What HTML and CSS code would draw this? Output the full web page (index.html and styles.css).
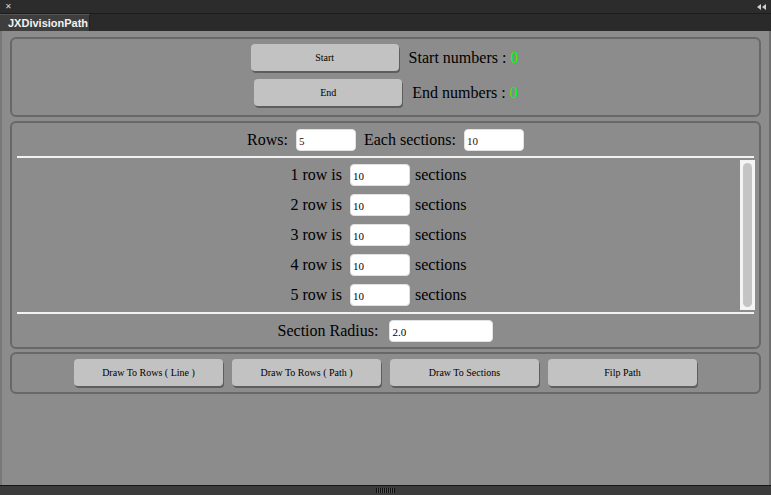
FILE: index.html
```html
<!DOCTYPE html>
<html>
<head>
<meta charset="utf-8">
<link rel="stylesheet" href="styles.css">
</head>
<body>
<div class="window">
  <div class="titlebar">
    <span class="close">✕</span>
    <svg class="collapse" width="9" height="6" viewBox="0 0 9 6"><path d="M4 0 L0 3 L4 6 Z M9 0 L5 3 L9 6 Z" fill="#cfcfcf"/></svg>
  </div>
  <div class="tabbar">
    <div class="tab">JXDivisionPath</div>
  </div>
  <div class="content">
    <div class="panel p1">
      <div class="crow r-start">
        <button class="btn big">Start</button>
        <span class="lbl">Start numbers : <span class="green">0</span></span>
      </div>
      <div class="crow r-end">
        <button class="btn big">End</button>
        <span class="lbl">End numbers : <span class="green">0</span></span>
      </div>
    </div>
    <div class="panel p2">
      <div class="crow top">
        <span class="lbl">Rows:</span>
        <input class="inp w60 red" value="5">
        <span class="lbl">Each sections:</span>
        <input class="inp w60 red" value="10">
      </div>
      <div class="sep"></div>
      <div class="listwrap">
        <div class="list">
          <div class="lrow"><span class="lbl">1 row is</span><input class="inp w60" value="10"><span class="lbl">sections</span></div>
          <div class="lrow"><span class="lbl">2 row is</span><input class="inp w60" value="10"><span class="lbl">sections</span></div>
          <div class="lrow"><span class="lbl">3 row is</span><input class="inp w60" value="10"><span class="lbl">sections</span></div>
          <div class="lrow"><span class="lbl">4 row is</span><input class="inp w60" value="10"><span class="lbl">sections</span></div>
          <div class="lrow"><span class="lbl">5 row is</span><input class="inp w60" value="10"><span class="lbl">sections</span></div>
        </div>
        <div class="scroll"><div class="thumb"></div></div>
      </div>
      <div class="sep"></div>
      <div class="crow radius">
        <span class="lbl">Section Radius:</span>
        <input class="inp w104" value="2.0">
      </div>
    </div>
    <div class="panel p3">
      <button class="btn small">Draw To Rows ( Line )</button>
      <button class="btn small">Draw To Rows ( Path )</button>
      <button class="btn small">Draw To Sections</button>
      <button class="btn small">Filp Path</button>
    </div>
  </div>
  <div class="bottombar">
    <div class="grip"></div>
  </div>
</div>
</body>
</html>
```

FILE: styles.css
```css
html, body {
  margin: 0;
  padding: 0;
  background: #8c8c8c;
}
body {
  width: 771px;
  height: 495px;
  overflow: hidden;
  font-family: "Liberation Serif", "Times New Roman", serif;
}
.window {
  width: 771px;
  height: 495px;
  display: flex;
  flex-direction: column;
  box-sizing: border-box;
  border-left: 2px solid #787878;
  border-right: 2px solid #6e6e6e;
}
.titlebar {
  height: 13px;
  background: #2c2c2c;
  display: flex;
  align-items: center;
  justify-content: space-between;
  padding: 0 5px 0 5px;
  margin: 0 -2px 0 -2px;
}
.close {
  color: #d8d8d8;
  font-family: "DejaVu Sans", sans-serif;
  font-size: 8px;
  font-weight: bold;
  line-height: 13px;
}
.tabbar {
  height: 17px;
  background: #2a2a2a;
  border-top: 1px solid #1c1c1c;
  display: flex;
  margin: 0 -2px 0 -2px;
}
.tab {
  width: 90px;
  background: #3e3e3e;
  border-top: 1px solid #555;
  color: #f2f2f2;
  font-family: "Liberation Sans", Arial, sans-serif;
  font-weight: bold;
  font-size: 11px;
  line-height: 16px;
  padding-left: 8px;
  box-sizing: border-box;
  border-right: 1px solid #222;
}
.content {
  flex: 1;
  padding: 6px 8px 0 8px;
  display: flex;
  flex-direction: column;
  gap: 4px;
}
.panel {
  border: 2px solid #686868;
  border-radius: 6px;
  box-sizing: border-box;
}
.p1 {
  height: 80px;
  padding-top: 5px;
  display: flex;
  flex-direction: column;
  gap: 8px;
}
.crow {
  display: flex;
  justify-content: center;
  align-items: center;
}
.r-start { gap: 10px; margin-left: -2px; }
.r-end { gap: 10px; margin-left: 1px; }
.lbl {
  font-size: 16px;
  color: #000;
  white-space: nowrap;
}
.green { color: #00ff00; }
.btn {
  font-family: "Liberation Serif", "Times New Roman", serif;
  background: #c2c2c2;
  border: none;
  border-radius: 4px;
  box-shadow: 1px 2px 0 #5e5e5e;
  color: #000;
  padding: 0;
  margin: 0;
}
.btn.big {
  width: 148px;
  height: 27px;
  font-size: 10px;
}
.p2 {
  height: 228px;
  display: flex;
  flex-direction: column;
  padding: 0 4px;
}
.top {
  height: 33px;
  gap: 8px;
  padding-top: 1px;
  box-sizing: border-box;
}
.inp {
  height: 22px;
  box-sizing: border-box;
  border: 1px solid #e2e2e2;
  border-radius: 4px;
  background: #fff;
  font-family: "Liberation Serif", "Times New Roman", serif;
  font-size: 11px;
  color: #000;
  padding: 2px 0 0 2px;
  margin: 0;
  outline: none;
}
.inp.red { color: #3a0a00; }
.w60 { width: 60px; }
.w104 { width: 104px; }
.sep {
  height: 2px;
  background: #f2f2f2;
  margin: 0 1px;
}
.listwrap {
  display: flex;
  height: 154px;
  padding: 2px 0 0 0;
  box-sizing: border-box;
}
.list {
  flex: 1;
  display: flex;
  flex-direction: column;
  padding-top: 4px;
  gap: 8px;
}
.lrow {
  display: flex;
  justify-content: center;
  align-items: center;
  gap: 8px;
  height: 22px;
  padding-left: 1px;
}
.lrow .lbl:last-child { margin-left: -3px; }
.scroll {
  width: 15px;
  height: 150px;
  background: #f4f4f4;
  box-sizing: border-box;
  padding: 3px;
}
.thumb {
  width: 9px;
  height: 144px;
  background: #c4c4c4;
  border-radius: 5px;
}
.radius {
  flex: 1;
  gap: 11px;
}
.p3 {
  height: 42px;
  margin-top: -1px;
  display: flex;
  justify-content: center;
  align-items: flex-start;
  gap: 9px;
  padding-top: 5px;
}
.btn.small {
  width: 149px;
  height: 27px;
  font-size: 10px;
}
.bottombar {
  height: 9px;
  background: #3b3b3b;
  border-top: 1px solid #161616;
  display: flex;
  justify-content: center;
  align-items: center;
  margin: 0 -2px 0 -2px;
}
.grip {
  width: 19px;
  height: 5px;
  background: repeating-linear-gradient(90deg, #0e0e0e 0 1px, #555 1px 2px);
}
```
